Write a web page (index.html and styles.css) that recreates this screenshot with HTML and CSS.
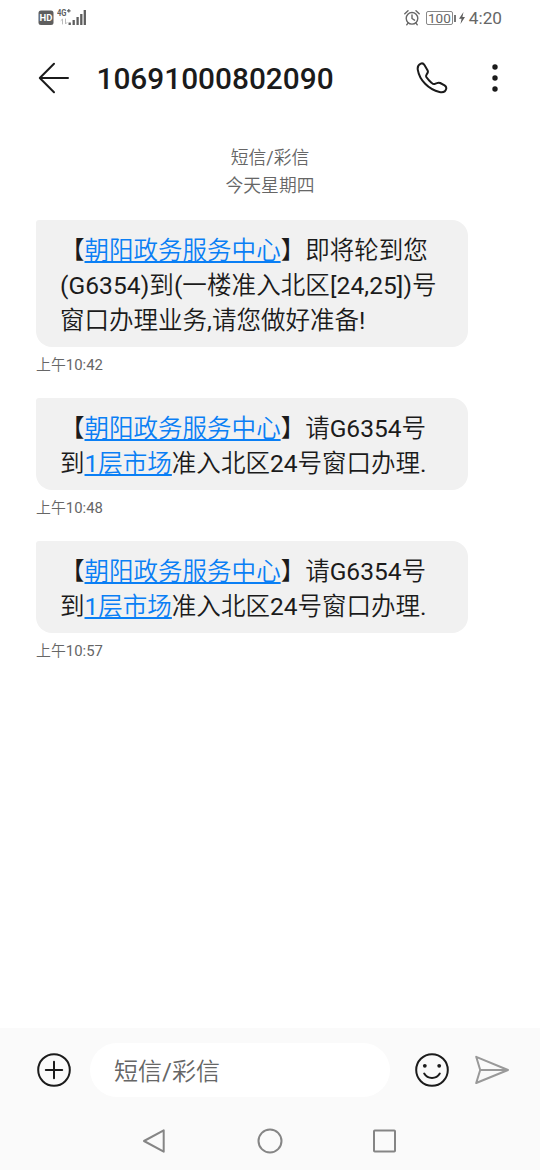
FILE: index.html
```html
<!DOCTYPE html>
<html lang="zh-CN">
<head>
<meta charset="utf-8">
<title>短信</title>
<link rel="stylesheet" href="styles.css">
</head>
<body>
<div class="phone">
  <div class="status">
    <svg class="hd" width="16" height="16" viewBox="0 0 16 16"><rect x=".5" y=".5" width="15" height="14.500" rx="2.500"/><text x="8" y="11.200" text-anchor="middle">HD</text></svg>
    <svg class="signal" width="30" height="20" viewBox="0 0 30 20"><text x="0" y="9" textLength="9.500" lengthAdjust="spacingAndGlyphs">4G</text><path class="bars" d="M10 3.800h3.600M11.800 2v3.600"/><path class="data" d="M5.500 17v-5l-1.500 1.500M8.500 12v5l1.500-1.500"/><path class="bars wide" d="M12.700 18v-2.500M16.700 18v-5M20.600 18v-8M24.300 18v-11M27.800 18V3"/></svg>
    <div class="status-right">
      <svg width="16" height="18" viewBox="0 0 16 18"><g class="alarm"><circle cx="8" cy="9.300" r="5.800"/><path d="M8 6v3.500l2.500 1.700M.8 4.700l3.200-2.900M15.200 4.700L12 1.800M4.200 13.800l-1.500 2M11.800 13.800l1.500 2"/></g></svg>
      <div class="battery">100</div><i class="tip"></i>
      <svg class="bolt" width="6" height="12" viewBox="0 0 6 12"><path d="M4.500 0L0 6.800h2.600L1.500 12 6 5H3.400z"/></svg>
      <span class="clock">4:20</span>
    </div>
  </div>
  <header class="bar">
    <svg class="back" width="32" height="32" viewBox="0 0 32 32"><path d="M30 16H2M16 1.800L1.800 16 16 30.200"/></svg>
    <h1>10691000802090</h1>
    <svg class="call" width="32" height="32" viewBox="0 0 32 32"><path d="M4.800 1.600C2.600 2.500 1.300 4.600 1.800 7.800C3.500 18 12.500 27.500 23.500 29.900C27 30.600 29.600 29.300 30.200 26.700C30.600 25.200 29.900 24.300 28.600 23.400L24.200 21C22.900 20.400 22 20.500 20.800 21.100L19 21.900C17.800 22.400 16.800 22 15.700 20.900C13.500 19 11.500 16.700 10.500 15.200C9.800 14 10 13.400 10.600 12.500L11.600 10.900C12.100 10 12 9.200 11.500 8.300L8.600 3.200C7.600 1.600 6.300 1 4.800 1.600Z"/></svg>
    <svg class="more" width="6" height="28" viewBox="0 0 6 28"><circle cx="3" cy="3" r="2.700"/><circle cx="3" cy="14" r="2.700"/><circle cx="3" cy="25" r="2.700"/></svg>
  </header>
  <main class="thread">
    <div class="day">短信/彩信<br>今天星期四</div>
    <div class="bubble">【<a>朝阳政务服务中心</a>】即将轮到您<br><span class="mixed">(G6354)到(一楼准入北区[24,25])号</span><br>窗口办理业务,请您做好准备!</div>
    <div class="time">上午10:42</div>
    <div class="bubble">【<a>朝阳政务服务中心</a>】请G6354号<br>到<a>1层市场</a>准入北区24号窗口办理.</div>
    <div class="time">上午10:48</div>
    <div class="bubble">【<a>朝阳政务服务中心</a>】请G6354号<br>到<a>1层市场</a>准入北区24号窗口办理.</div>
    <div class="time">上午10:57</div>
  </main>
  <footer class="dock">
    <div class="compose">
      <svg class="line" width="34" height="34" viewBox="0 0 34 34"><circle cx="17" cy="17" r="15.800"/><path d="M17 8.800v16.400M8.800 17h16.400"/></svg>
      <div class="input">短信/彩信</div>
      <svg class="line" width="34" height="34" viewBox="0 0 34 34"><circle cx="17" cy="17" r="15.800"/><path d="M9.200 20.500c3.500 5.900 12.100 5.900 15.600 0"/><circle class="eye" cx="9.800" cy="12.800" r="1.900"/><circle class="eye" cx="24.200" cy="12.800" r="1.900"/></svg>
      <svg class="send" width="36" height="30" viewBox="0 0 36 30"><path d="M2.200 1.800L34 15 2.200 28 6.200 15zM6.200 15H34"/></svg>
    </div>
    <nav class="nav">
      <svg width="24" height="26" viewBox="0 0 24 26"><path d="M21.700 2.300v21.400L2 13z"/></svg>
      <svg width="26" height="26" viewBox="0 0 26 26"><circle cx="13" cy="13" r="11.500"/></svg>
      <svg width="24" height="24" viewBox="0 0 24 24"><rect x="1" y="1.500" width="21" height="21" rx=".8"/></svg>
    </nav>
  </footer>
</div>
</body>
</html>
```
FILE: styles.css
```css
* { box-sizing: border-box; }
body { margin: 0; background: #fff; color: #1b1b1b; font-family: Roboto, "Noto Sans CJK SC DemiLight", "Noto Sans CJK SC", sans-serif; }
svg { display: block; flex: none; fill: none; stroke-linecap: round; stroke-linejoin: round; }
.phone { width: 540px; height: 1170px; display: flex; flex-direction: column; overflow: hidden; }

.status { height: 36px; display: flex; align-items: center; padding: 0 38px; color: #666; }
.hd rect { fill: #5e5e5e; }
.hd text { fill: #fff; font: 700 9.500px Roboto, sans-serif; }
.signal { margin: -2px 0 0 3px; }
.signal text { fill: #5e5e5e; font: 700 9px Roboto, sans-serif; }
.bars { stroke: #5e5e5e; stroke-width: 1.200; stroke-linecap: butt; }
.wide { stroke-width: 2.300; }
.data { stroke: #bbb; stroke-width: 1; }
.status-right { display: flex; align-items: center; margin-left: auto; }
.alarm { stroke: #666; stroke-width: 1.400; }
.battery { width: 27px; height: 14px; margin-left: 6px; border: 1px solid #888; border-radius: 2px; font-size: 13.500px; line-height: 12px; text-align: center; }
.tip { width: 2px; height: 7px; margin-left: 1px; background: #777; }
.bolt { margin: 0 4px 0 3px; fill: #5e5e5e; }
.clock { font-size: 17.200px; line-height: 20px; }

.bar { height: 84px; display: flex; align-items: center; padding: 0 42px 0 38px; }
.back, .call, .line { stroke: #1b1b1b; stroke-width: 2; }
h1 { margin: 2px 0 0 26.500px; flex: 1; font-size: 29.800px; line-height: 36px; font-weight: 500; }
.more { margin-left: 44px; fill: #1b1b1b; }

.thread { flex: 1; padding: 24px 36px 0; }
.day { margin-bottom: 20px; color: #666; font-size: 17.800px; line-height: 28px; text-align: center; }
.bubble { width: 432px; padding: 13px 24px 9px; background: #f1f1f1; border-radius: 3px 16px 16px 16px; font-size: 24.530px; line-height: 35px; white-space: nowrap; }
.mixed { letter-spacing: .08px; }
.bubble a { color: #0a7ff5; text-decoration: underline; text-decoration-thickness: 1.500px; text-underline-offset: 2px; }
.time { height: 51px; padding-top: 8px; color: #666; font-size: 14.900px; line-height: 20px; }

.dock { height: 142px; background: #fafafa; }
.compose { display: flex; align-items: center; height: 84px; padding: 0 30px 0 37px; }
.input { width: 300px; height: 54px; margin: 0 25px 0 19px; padding: 2px 0 0 24px; border-radius: 27px; background: #fff; color: #666; font-size: 24px; line-height: 54px; }
.line .eye { fill: #1b1b1b; stroke: none; }
.send { margin-left: 25px; stroke: #999; stroke-width: 2; }
.nav { display: flex; align-items: center; justify-content: space-between; height: 58px; padding: 0 143px 0 142px; }
.nav svg { stroke: #858585; stroke-width: 2; }
```
